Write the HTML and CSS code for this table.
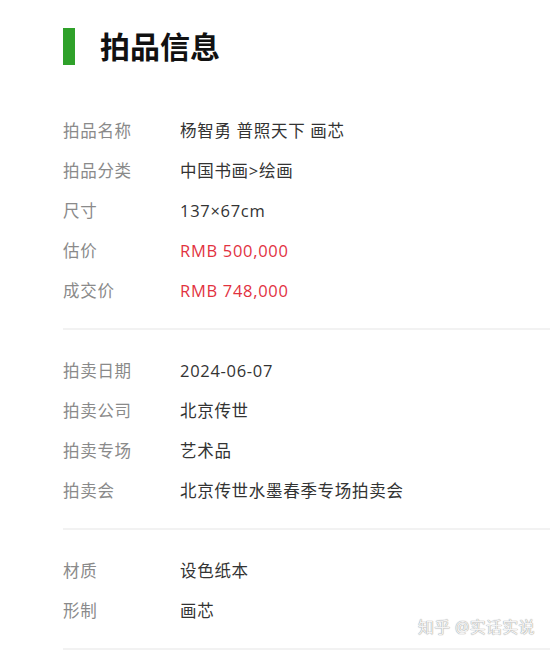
FILE: index.html
```html
<!DOCTYPE html>
<html lang="zh-CN">

<head>
    <meta charset="UTF-8" />
    <meta name="viewport" content="width=device-width, initial-scale=1.0" />
    <title>拍品信息</title>
    <link rel="stylesheet" href="styles.css">
</head>

<body>
    <div class="page">
        <div class="header">
            <span class="header-bar"></span>
            <h2>拍品信息</h2>
        </div>

        <div class="section">
            <div class="row"><span class="label">拍品名称</span><span class="value">杨智勇 普照天下 画芯</span></div>
            <div class="row"><span class="label">拍品分类</span><span class="value">中国书画&gt;绘画</span></div>
            <div class="row"><span class="label">尺寸</span><span class="value">137×67cm</span></div>
            <div class="row"><span class="label">估价</span><span class="value price">RMB 500,000</span></div>
            <div class="row"><span class="label">成交价</span><span class="value price">RMB 748,000</span></div>
        </div>

        <div class="section">
            <div class="row"><span class="label">拍卖日期</span><span class="value">2024-06-07</span></div>
            <div class="row"><span class="label">拍卖公司</span><span class="value">北京传世</span></div>
            <div class="row"><span class="label">拍卖专场</span><span class="value">艺术品</span></div>
            <div class="row"><span class="label">拍卖会</span><span class="value">北京传世水墨春季专场拍卖会</span></div>
        </div>

        <div class="section">
            <div class="row"><span class="label">材质</span><span class="value">设色纸本</span></div>
            <div class="row"><span class="label">形制</span><span class="value">画芯</span></div>
        </div>
    </div>

    <div class="watermark">知乎 @实话实说</div>
</body>

</html>
```
FILE: styles.css
```css
* {
    box-sizing: border-box;
}

body {
    margin: 0;
    font-family: "Open Sans", "Noto Sans CJK SC", sans-serif;
    background-color: #fff;
    color: #333;
}

.page {
    padding-left: 63px;
}

.header {
    display: flex;
    align-items: center;
    margin-top: 28px;
    height: 37px;
    margin-bottom: 45px;
}

.header-bar {
    width: 12px;
    height: 37px;
    background-color: #2fa12a;
}

.header h2 {
    margin: 0 0 0 25px;
    font-size: 30px;
    font-weight: bold;
    color: #111;
    line-height: 37px;
}

.section {
    padding: 0 0 18px;
    border-bottom: 2px solid #f2f2f2;
}

.section + .section {
    padding-top: 20px;
}

.row {
    display: flex;
    height: 40px;
    padding-top: 2px;
    line-height: 38px;
    font-size: 16.5px;
    letter-spacing: 0.7px;
}

.label {
    width: 117px;
    color: #8a8a8a;
}

.value {
    color: #333;
}

.price {
    color: #e2323f;
}

.watermark {
    position: absolute;
    top: 614px;
    left: 418px;
    font-size: 16px;
    letter-spacing: 0.3px;
    color: #f4f4f4;
    text-shadow: 0 0 1px #999, 0 0 1px #aaa;
}
```
